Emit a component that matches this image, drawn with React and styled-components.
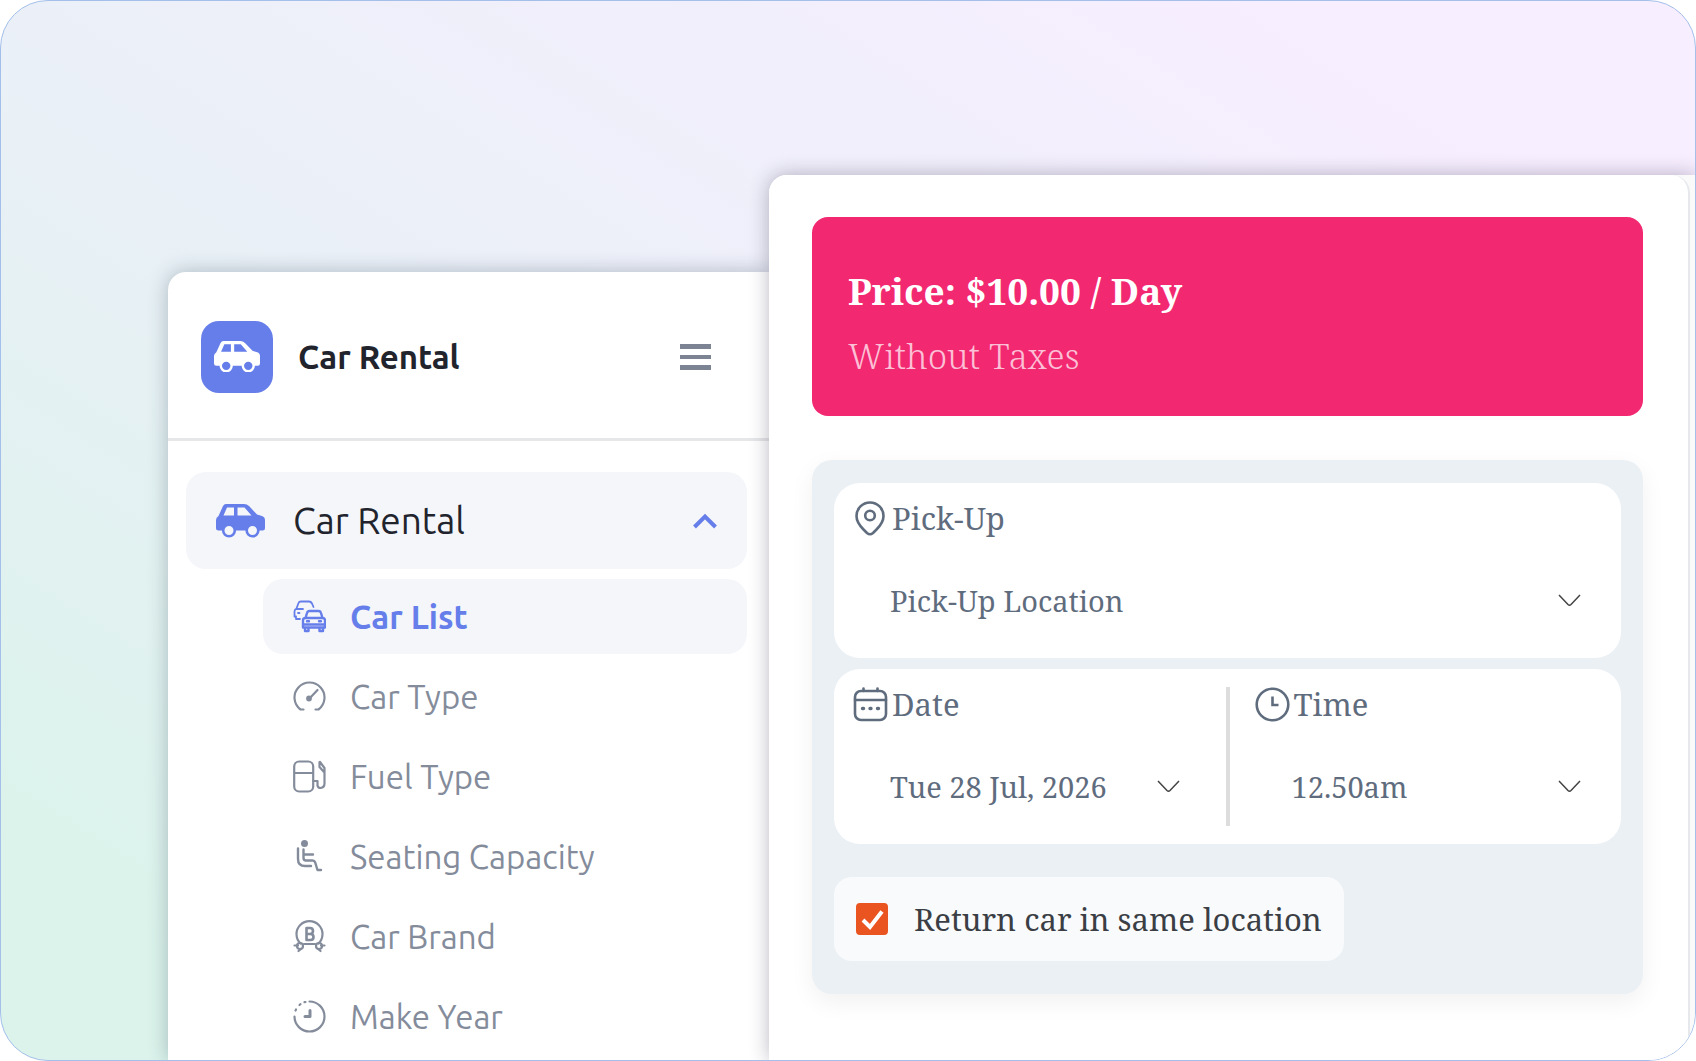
import { useState } from "react";
import styled, { createGlobalStyle } from "styled-components";

const GlobalStyle = createGlobalStyle`
  * {
    box-sizing: border-box;
  }
  body {
    margin: 0;
    background-color: #fff;
    font-family: "Ubuntu", "Noto Sans", sans-serif;
  }
  button, select, input {
    font-family: inherit;
    margin: 0;
  }
`;

const Stage = styled.div`
  display: flex;
  min-height: 100vh;
  padding-left: 167px;
  border: 1px solid #a3bfea;
  border-radius: 48px;
  overflow: hidden;
  background: linear-gradient(to top right, #dbf3eb 10%, #ebf0f8 50%, #f7eeff 88%);
`;

/* ---------- sidebar ---------- */

const Sidebar = styled.aside`
  flex: 0 0 601px;
  margin-top: 271px;
  background-color: #fff;
  border-top-left-radius: 18px;
  box-shadow: 0 0 20px rgba(30, 50, 70, 0.3);
`;

const SidebarHeader = styled.header`
  display: flex;
  align-items: center;
  height: 169px;
  padding: 3px 58px 0 33px;
  border-bottom: 3px solid #e6e7e9;
`;

const Logo = styled.div`
  display: flex;
  align-items: center;
  justify-content: center;
  width: 72px;
  height: 72px;
  border-radius: 18px;
  background-color: #667eea;
  color: #fff;
`;

const AppName = styled.h1`
  flex: 1;
  margin: 0 0 0 25px;
  font-size: 33px;
  font-weight: 700;
  line-height: 40px;
  color: #22242d;
`;

const MenuButton = styled.button`
  display: flex;
  padding: 0;
  border: 0;
  background: none;
  color: #7c8494;
  cursor: pointer;
`;

const Nav = styled.nav`
  padding: 31px 22px 0 18px;
`;

const NavGroup = styled.button`
  display: flex;
  align-items: center;
  width: 100%;
  height: 97px;
  padding: 0 30px;
  border: 0;
  border-radius: 20px;
  background-color: #f4f6fa;
  color: #667eea;
  cursor: pointer;
`;

const NavGroupTitle = styled.span`
  flex: 1;
  margin-left: 28px;
  font-size: 37px;
  text-align: left;
  color: #22242d;
`;

const SubNav = styled.ul`
  display: grid;
  gap: 5px;
  margin: 10px 0 0 77px;
  padding: 0;
  list-style: none;
`;

const SubLink = styled.a`
  display: flex;
  align-items: center;
  gap: 24px;
  height: 75px;
  padding-left: 30px;
  border-radius: 20px;
  font-size: 33px;
  font-weight: ${(props) => (props.$active ? 700 : 400)};
  color: ${(props) => (props.$active ? "#667eea" : "#848c9b")};
  background-color: ${(props) => (props.$active ? "#f4f6fa" : "transparent")};
  text-decoration: none;
`;

/* ---------- booking panel ---------- */

const Panel = styled.main`
  position: relative;
  flex: 1;
  display: flex;
  min-width: 0;
  margin-top: 174px;
  padding-right: 5px;
  border-top-left-radius: 18px;
  background-color: #fafafb;
  box-shadow: 0 0 20px rgba(40, 30, 60, 0.32);
  font-family: "Noto Serif", "DejaVu Serif Condensed", serif;
`;

const PanelCard = styled.div`
  flex: 1;
  padding: 42px 45px 0 43px;
  border-right: 2px solid #e6e8ec;
  border-radius: 18px 18px 0 0;
  background-color: #fff;
`;

const PriceBox = styled.section`
  padding: 41px 36px 28px;
  border-radius: 16px;
  background-color: #f22871;
  line-height: 65px;
`;

const Price = styled.h2`
  margin: 0;
  font-size: 37px;
  font-weight: 700;
  color: #fff;
`;

const TaxNote = styled.p`
  margin: 0;
  font-size: 35px;
  font-weight: 300;
  color: #fcc0d6;
`;

const BookingForm = styled.form`
  margin-top: 44px;
  padding: 23px 22px 33px;
  border-radius: 20px;
  background-color: #ebf0f5;
  box-shadow: 0 8px 24px rgba(0, 0, 0, 0.06);
`;

const FieldBox = styled.div`
  display: flex;
  height: 175px;
  margin-bottom: 11px;
  border-radius: 26px;
  background-color: #fff;
`;

const FieldWrapper = styled.div`
  flex: 1;
  min-width: 0;
  padding: 16px 19px 0;
  color: #5f6c7e;
`;

const FieldLabel = styled.label`
  display: flex;
  align-items: center;
  gap: 4px;
  height: 38px;
  font-size: 31px;
`;

/* the arrow sits in the same cell as the select */
const SelectCell = styled.div`
  display: grid;
  align-items: center;
  margin-top: 38px;
  > * {
    grid-area: 1 / 1;
  }
  > svg {
    justify-self: end;
    margin-right: 21px;
    color: #444;
    pointer-events: none;
  }
`;

const Select = styled.select`
  appearance: none;
  width: 100%;
  height: 50px;
  padding: 0 60px 0 37px;
  border: 0;
  background: none;
  font-size: 29px;
  color: inherit;
`;

const Divider = styled.div`
  width: 4px;
  margin: 18px 6px;
  background-color: #ddd;
`;

const ReturnOption = styled.label`
  display: inline-flex;
  align-items: center;
  gap: 26px;
  height: 84px;
  margin-top: 22px;
  padding: 0 22px;
  border-radius: 18px;
  background-color: #f9fafc;
  font-size: 31px;
  color: #3b3e45;
  vertical-align: top;
`;

const CheckCell = styled.span`
  display: grid;
  > * {
    grid-area: 1 / 1;
  }
  > svg {
    pointer-events: none;
  }
`;

const Checkbox = styled.input`
  appearance: none;
  width: 32px;
  height: 32px;
  border: 2px solid #e95420;
  border-radius: 4px;
  background-color: #fff;
  &:checked {
    background-color: #e95420;
  }
`;

/* ---------- icons ---------- */

const CarIcon = ({ width = 49 }) => (
  <svg width={width} viewBox="0 0 49 34" fill="currentColor" aria-hidden="true">
    <path
      fillRule="evenodd"
      d="M10 0H28Q31 0 33 2L41 10.500L46 12Q49 13 49 16V24Q49 26.500 46.500 26.500H42A5.500 5.500 0 0 0 31 26.500H18.500A5.500 5.500 0 0 0 7.500 26.500H2.500Q0 26.500 0 24V16Q0 13.500 2.500 12L7 2Q8 0 10 0ZM11 3.500L7.500 11.500H18V3.500ZM21.500 3.500V11.500H35.500L28.500 3.500Z"
    />
    <g fill="none" stroke="currentColor" strokeWidth="2.600">
      <circle cx="13" cy="26.500" r="5.800" />
      <circle cx="36.500" cy="26.500" r="5.800" />
    </g>
  </svg>
);

const MenuIcon = () => (
  <svg width="31" height="28" viewBox="0 0 31 28" fill="currentColor" aria-hidden="true">
    <path d="M0 1h31v5H0zM0 12h31v4H0zM0 22h31v5H0z" />
  </svg>
);

const LineIcon = ({ size = 33, strokeWidth = 2.2, children }) => (
  <svg
    width={size}
    height={size}
    viewBox={`0 0 ${size} ${size}`}
    fill="none"
    stroke="currentColor"
    strokeWidth={strokeWidth}
    strokeLinecap="round"
    strokeLinejoin="round"
    aria-hidden="true"
  >
    {children}
  </svg>
);

const CarsIcon = () => (
  <LineIcon>
    <path d="M20.500 7L19 3.500Q18 1.500 16 1.500H8Q6 1.500 5.500 3L3.500 8.500Q1.500 9.500 1.500 11.500V16.500H3V19H7M3.500 9H10M5 13H6.500" strokeWidth="1.800" />
    <path d="M12.500 18L14 13Q14.500 11 16.500 11H25.500Q27.500 11 28 13L29.500 18M10 20.500Q10 18 12.500 18H29.500Q32 18 32 20.500V27.500H10V20.500ZM10 24.500H32M12 28V31H15.500V28M26.500 28V31H30V28M14 21.200H16M26 21.200H28" strokeWidth="2.400" />
  </LineIcon>
);

const GaugeIcon = () => (
  <LineIcon>
    <path d="M10.500 29.500H7.500A15 15 0 1 1 25.500 29.500H22.500" />
    <path d="M16 19L24.500 10" />
    <circle cx="16" cy="18.500" r="1.800" fill="currentColor" />
  </LineIcon>
);

const FuelIcon = () => (
  <LineIcon>
    <rect x="1.200" y="1.500" width="19" height="30" rx="5" />
    <path d="M2 13H20M20.500 21H24.500V25.500Q25 28 27.500 28Q31.500 27.500 31.500 23.500V8L27 2M26.500 2V7L31 12" />
  </LineIcon>
);

const SeatIcon = () => (
  <LineIcon>
    <circle cx="11.500" cy="3.500" r="3.500" fill="currentColor" stroke="none" />
    <path d="M5 8.500V19Q5 26 12 26H18M10.500 9.500V18Q10.500 20.500 13 20.500H19.500Q21.500 20.500 22.200 22.500L24.500 30H28M11.500 14.500H20" strokeWidth="2.400" />
  </LineIcon>
);

const BrandIcon = () => (
  <LineIcon>
    <path d="M7.500 23.500A13 13 0 1 1 25.500 23.500" />
    <path d="M13.500 8H17Q20 8 20 11Q20 14 17 14H13.500H17.500Q20.500 14 20.500 17Q20.500 20 17.500 20H13.500Z" strokeWidth="2.600" />
    <path d="M11 24H22M1.500 25.500H5M28 25.500H31.500M8 29L5.500 31M25 29L27.500 31" />
    <circle cx="7" cy="26" r="3" />
    <circle cx="26" cy="26" r="3" />
  </LineIcon>
);

const YearIcon = () => (
  <LineIcon>
    <path d="M16.500 1.500A15 15 0 1 1 1.500 16.500" />
    <path d="M2.500 10.500L3 9.500M6.500 5L7.500 4.200M11.500 2.200L12.500 2" />
    <path d="M17 10.500V16.500H12" strokeWidth="3" />
  </LineIcon>
);

const PinIcon = () => (
  <LineIcon size={35} strokeWidth={2.6}>
    <path d="M17 1.500A13.500 13.500 0 0 1 30.500 15Q30.500 21.500 23.500 28.500L20 32Q17 34.500 14 32L10.500 28.500Q3.500 21.500 3.500 15A13.500 13.500 0 0 1 17 1.500Z" />
    <circle cx="17" cy="14.500" r="4.800" />
  </LineIcon>
);

const CalendarIcon = () => (
  <LineIcon size={35} strokeWidth={2.6}>
    <rect x="2" y="4" width="31" height="29" rx="6" />
    <path d="M2 13H33M10.500 1.500V4M24.500 1.500V4" />
    <path d="M9.500 21.500H10.500M17 21.500H18M24.500 21.500H25.500" strokeWidth="3.400" />
  </LineIcon>
);

const ClockIcon = () => (
  <LineIcon size={35} strokeWidth={2.6}>
    <circle cx="17.500" cy="17.500" r="15.800" />
    <path d="M17.500 9.500V18H23.500" strokeLinecap="butt" strokeLinejoin="miter" />
  </LineIcon>
);

const ArrowDown = () => (
  <svg width="23" height="13" viewBox="0 0 23 13" fill="none" stroke="currentColor" strokeWidth="1.500" aria-hidden="true">
    <path d="M1 1L10 10.500Q11.500 12 13 10.500L22 1" />
  </svg>
);

const ArrowUp = () => (
  <svg width="24" height="16" viewBox="0 0 24 16" fill="none" stroke="currentColor" strokeWidth="4" aria-hidden="true">
    <path d="M1.500 14L12 3.500L22.500 14" />
  </svg>
);

const CheckMark = () => (
  <svg width="32" height="32" viewBox="0 0 32 32" fill="none" stroke="#fff" strokeWidth="4" aria-hidden="true">
    <path d="M7 17L14 24L26 8.500" />
  </svg>
);

/* ---------- page ---------- */

const links = [
  { name: "Car List", Icon: CarsIcon },
  { name: "Car Type", Icon: GaugeIcon },
  { name: "Fuel Type", Icon: FuelIcon },
  { name: "Seating Capacity", Icon: SeatIcon },
  { name: "Car Brand", Icon: BrandIcon },
  { name: "Make Year", Icon: YearIcon },
];

function Field({ id, label, icon, value }) {
  return (
    <FieldWrapper>
      <FieldLabel htmlFor={id}>
        {icon}
        {label}
      </FieldLabel>
      <SelectCell>
        <Select id={id}>
          <option>{value}</option>
        </Select>
        <ArrowDown />
      </SelectCell>
    </FieldWrapper>
  );
}

export default function App() {
  const [sameLocation, setSameLocation] = useState(true);
  const [active, setActive] = useState("Car List");
  return (
    <Stage>
      <GlobalStyle />
      <Sidebar>
        <SidebarHeader>
          <Logo>
            <CarIcon width={46} />
          </Logo>
          <AppName>Car Rental</AppName>
          <MenuButton type="button" aria-label="Menu">
            <MenuIcon />
          </MenuButton>
        </SidebarHeader>
        <Nav>
          <NavGroup type="button" aria-expanded="true">
            <CarIcon />
            <NavGroupTitle>Car Rental</NavGroupTitle>
            <ArrowUp />
          </NavGroup>
          <SubNav>
            {links.map(({ name, Icon }) => (
              <li key={name}>
                <SubLink href="#" $active={active === name} onClick={() => setActive(name)}>
                  <Icon />
                  {name}
                </SubLink>
              </li>
            ))}
          </SubNav>
        </Nav>
      </Sidebar>
      <Panel>
        <PanelCard>
          <PriceBox>
            <Price>Price: $10.00 / Day</Price>
            <TaxNote>Without Taxes</TaxNote>
          </PriceBox>
          <BookingForm>
            <FieldBox>
              <Field id="pickup" label="Pick-Up" icon={<PinIcon />} value="Pick-Up Location" />
            </FieldBox>
            <FieldBox>
              <Field id="date" label="Date" icon={<CalendarIcon />} value="Tue 28 Jul, 2026" />
              <Divider />
              <Field id="time" label="Time" icon={<ClockIcon />} value="12.50am" />
            </FieldBox>
            <ReturnOption>
              <CheckCell>
                <Checkbox
                  type="checkbox"
                  checked={sameLocation}
                  onChange={() => setSameLocation(!sameLocation)}
                />
                {sameLocation && <CheckMark />}
              </CheckCell>
              Return car in same location
            </ReturnOption>
          </BookingForm>
        </PanelCard>
      </Panel>
    </Stage>
  );
}
